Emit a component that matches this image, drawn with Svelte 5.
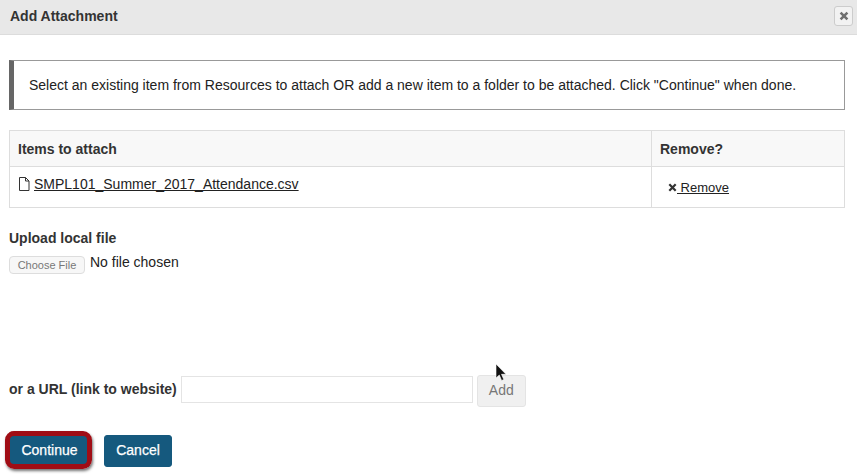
<script>
	let fileName = 'SMPL101_Summer_2017_Attendance.csv';
</script>

<div class="dialog">
	<header class="titlebar">
		<h1>Add Attachment</h1>
		<button class="close" aria-label="Close">
			<svg width="10" height="10" viewBox="0 0 10 10"><path d="M1.6 1.6 8.4 8.4M8.4 1.6 1.6 8.4" stroke="#6f6f6f" stroke-width="2.6" /></svg>
		</button>
	</header>

	<div class="content">
		<p class="notice">Select an existing item from Resources to attach OR add a new item to a folder to be attached. Click "Continue" when done.</p>

		<table>
			<thead>
				<tr>
					<th>Items to attach</th>
					<th class="col-remove">Remove?</th>
				</tr>
			</thead>
			<tbody>
				<tr>
					<td class="file-cell">
						<svg class="file-icon" width="12" height="14" viewBox="0 0 12 14"><path d="M1.5.5H7.5L11 4V13.5H1.5ZM7.5.5V4H11" fill="none" stroke="#333" /></svg><a href="#top">{fileName}</a>
					</td>
					<td class="remove-cell">
						<a href="#top"><svg width="9" height="9" viewBox="0 0 9 9"><path d="M1.3 1.3 7.7 7.7M7.7 1.3 1.3 7.7" stroke="#333" stroke-width="2.2" /></svg> Remove</a>
					</td>
				</tr>
			</tbody>
		</table>

		<div class="upload">
			<div class="upload-label">Upload local file</div>
			<div class="file-row">
				<span class="choose">Choose File</span>
				<span class="chosen">No file chosen</span>
			</div>
		</div>

		<div class="url-row">
			<label for="url">or a URL (link to website)</label>
			<input id="url" type="text" />
			<button class="add">Add</button>
		</div>

		<div class="actions">
			<span class="highlight"><button class="primary">Continue</button></span>
			<button class="primary cancel">Cancel</button>
		</div>
	</div>

	<svg class="cursor" width="12" height="20" viewBox="0 0 12 20"><path d="M1 1V15L4.3 12 6.6 17.5 8.8 16.5 6.5 11.3H11Z" fill="#111" stroke="#fff" stroke-width=".6" /></svg>
</div>

<style>
	:global(body) {
		background: #fff;
	}
	.dialog {
		position: relative;
		width: 857px;
		height: 474px;
		overflow: hidden;
		font-family: 'Liberation Sans', Arial, sans-serif;
		font-size: 14px;
		color: #333;
	}
	.titlebar {
		display: flex;
		align-items: center;
		justify-content: space-between;
		box-sizing: border-box;
		height: 35px;
		padding: 0 4px 2px 10px;
		background: #e8e8e8;
		border-bottom: 1px solid #dcdcdc;
	}
	h1 {
		margin: 0;
		font-size: 14px;
		font-weight: 700;
		color: #333;
	}
	.close {
		display: flex;
		align-items: center;
		justify-content: center;
		width: 19px;
		height: 20px;
		padding: 0;
		background: #f2f2f2;
		border: 1px solid #ccc;
		border-radius: 3px;
	}
	.content {
		padding: 25px 10px 0 9px;
	}
	.notice {
		box-sizing: border-box;
		width: 836px;
		height: 50px;
		margin: 0 0 20px;
		padding: 0 0 0 15px;
		display: flex;
		align-items: center;
		color: #222;
		border: 1px solid #999;
		border-left: 5px solid #666;
	}
	table {
		width: 836px;
		border-collapse: collapse;
		table-layout: fixed;
	}
	th,
	td {
		border: 1px solid #ddd;
		padding: 0 8px;
		text-align: left;
	}
	th {
		height: 35px;
		background: #f8f8f8;
		font-weight: 700;
	}
	td {
		height: 31px;
	}
	.col-remove {
		width: 176px;
	}
	.file-cell {
		vertical-align: top;
		padding-top: 9px;
	}
	.file-icon {
		margin-right: 4px;
		vertical-align: -2px;
	}
	a {
		color: #222;
		text-decoration: underline;
	}
	.remove-cell {
		padding-left: 16px;
		padding-top: 1px;
		font-size: 13px;
	}
	.upload {
		margin-top: 22px;
	}
	.upload-label {
		font-weight: 700;
		line-height: 16px;
	}
	.file-row {
		display: flex;
		align-items: flex-start;
		gap: 5px;
		margin-top: 10px;
	}
	.choose {
		box-sizing: border-box;
		width: 76px;
		height: 18px;
		text-align: center;
		font-size: 11px;
		line-height: 17px;
		color: #777;
		background: #f7f7f7;
		border: 1px solid #ddd;
		border-radius: 4px;
	}
	.chosen {
		margin-top: -2px;
		line-height: 16px;
		color: #222;
	}
	.url-row {
		display: flex;
		align-items: flex-start;
		margin-top: 101px;
	}
	label {
		font-weight: 700;
		line-height: 29px;
		margin-right: 4px;
	}
	input {
		box-sizing: border-box;
		width: 292px;
		height: 27px;
		margin: 1px 4px 0 0;
		border: 1px solid #e4e4e4;
		background: #fff;
	}
	.add {
		width: 49px;
		height: 32px;
		padding: 0 0 2px;
		font: inherit;
		color: #777;
		background: #f0f0f0;
		border: 1px solid #e4e4e4;
		border-radius: 3px;
	}
	.actions {
		display: flex;
		align-items: center;
		gap: 14px;
		margin-top: 28px;
	}
	.primary {
		height: 32px;
		padding: 0 0 2px;
		font: inherit;
		color: #fff;
		background: #15597e;
		border: 1px solid #15597e;
		border-radius: 3px;
		-webkit-text-stroke: 0.25px #fff;
	}
	.cancel {
		width: 68px;
	}
	.highlight {
		position: relative;
		display: flex;
		width: 81px;
	}
	.highlight .primary {
		width: 100%;
	}
	/* red annotation ring drawn on top of the button */
	.highlight::after {
		content: '';
		position: absolute;
		top: -4px;
		left: -4px;
		right: -2px;
		bottom: -2px;
		border: 5px solid #a00d15;
		border-radius: 9px;
		box-shadow: 1px 2px 3px rgba(0, 0, 0, 0.55);
		pointer-events: none;
	}
	.cursor {
		position: absolute;
		left: 495px;
		top: 363px;
	}
</style>
